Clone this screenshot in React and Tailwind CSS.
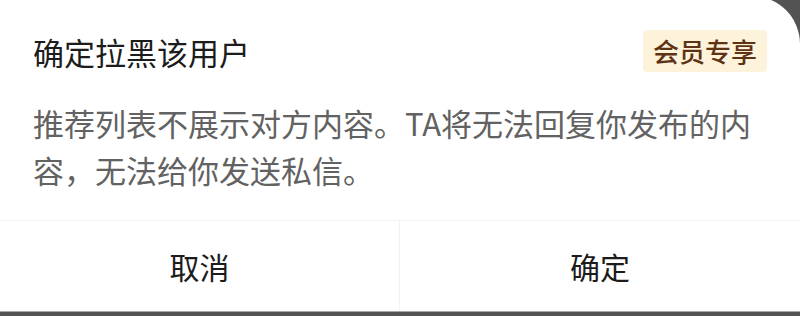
import React from "react";

const font = { fontFamily: '"Noto Sans CJK SC", "Noto Sans", sans-serif' };

export default function App() {
  return (
    <div
      className="flex h-[316px] w-[800px] flex-col overflow-hidden bg-[#535353]"
      style={font}
    >
      <div className="-mt-[4px] flex h-[315px] flex-col rounded-tr-[48px] bg-white">
        <div className="px-[33px] pt-[34px] pb-[27px]">
          <div className="flex h-[42px] items-center justify-between">
            <h2 className="text-[31px] leading-none font-normal text-[#1c1c1c]">确定拉黑该用户</h2>
            <span className="flex h-[42px] items-center rounded-[4px] bg-[#fdf2da] px-[10px] text-[26px] leading-none font-medium text-[#5e3314]">
              会员专享
            </span>
          </div>
          <p className="mt-[27px] text-[31px] leading-[47px] text-[#626262]">
            推荐列表不展示对方内容。TA将无法回复你发布的内容，无法给你发送私信。
          </p>
        </div>
        <div className="grid flex-1 grid-cols-2 border-t border-[#f4f4f4]">
          <button className="flex items-center justify-center border-r border-[#f2f2f2] text-[30px] text-[#1c1c1c]">
            取消
          </button>
          <button className="flex items-center justify-center text-[30px] text-[#1c1c1c]">
            确定
          </button>
        </div>
      </div>
      <div className="h-[1px] bg-[#a8a8a8]" />
    </div>
  );
}
